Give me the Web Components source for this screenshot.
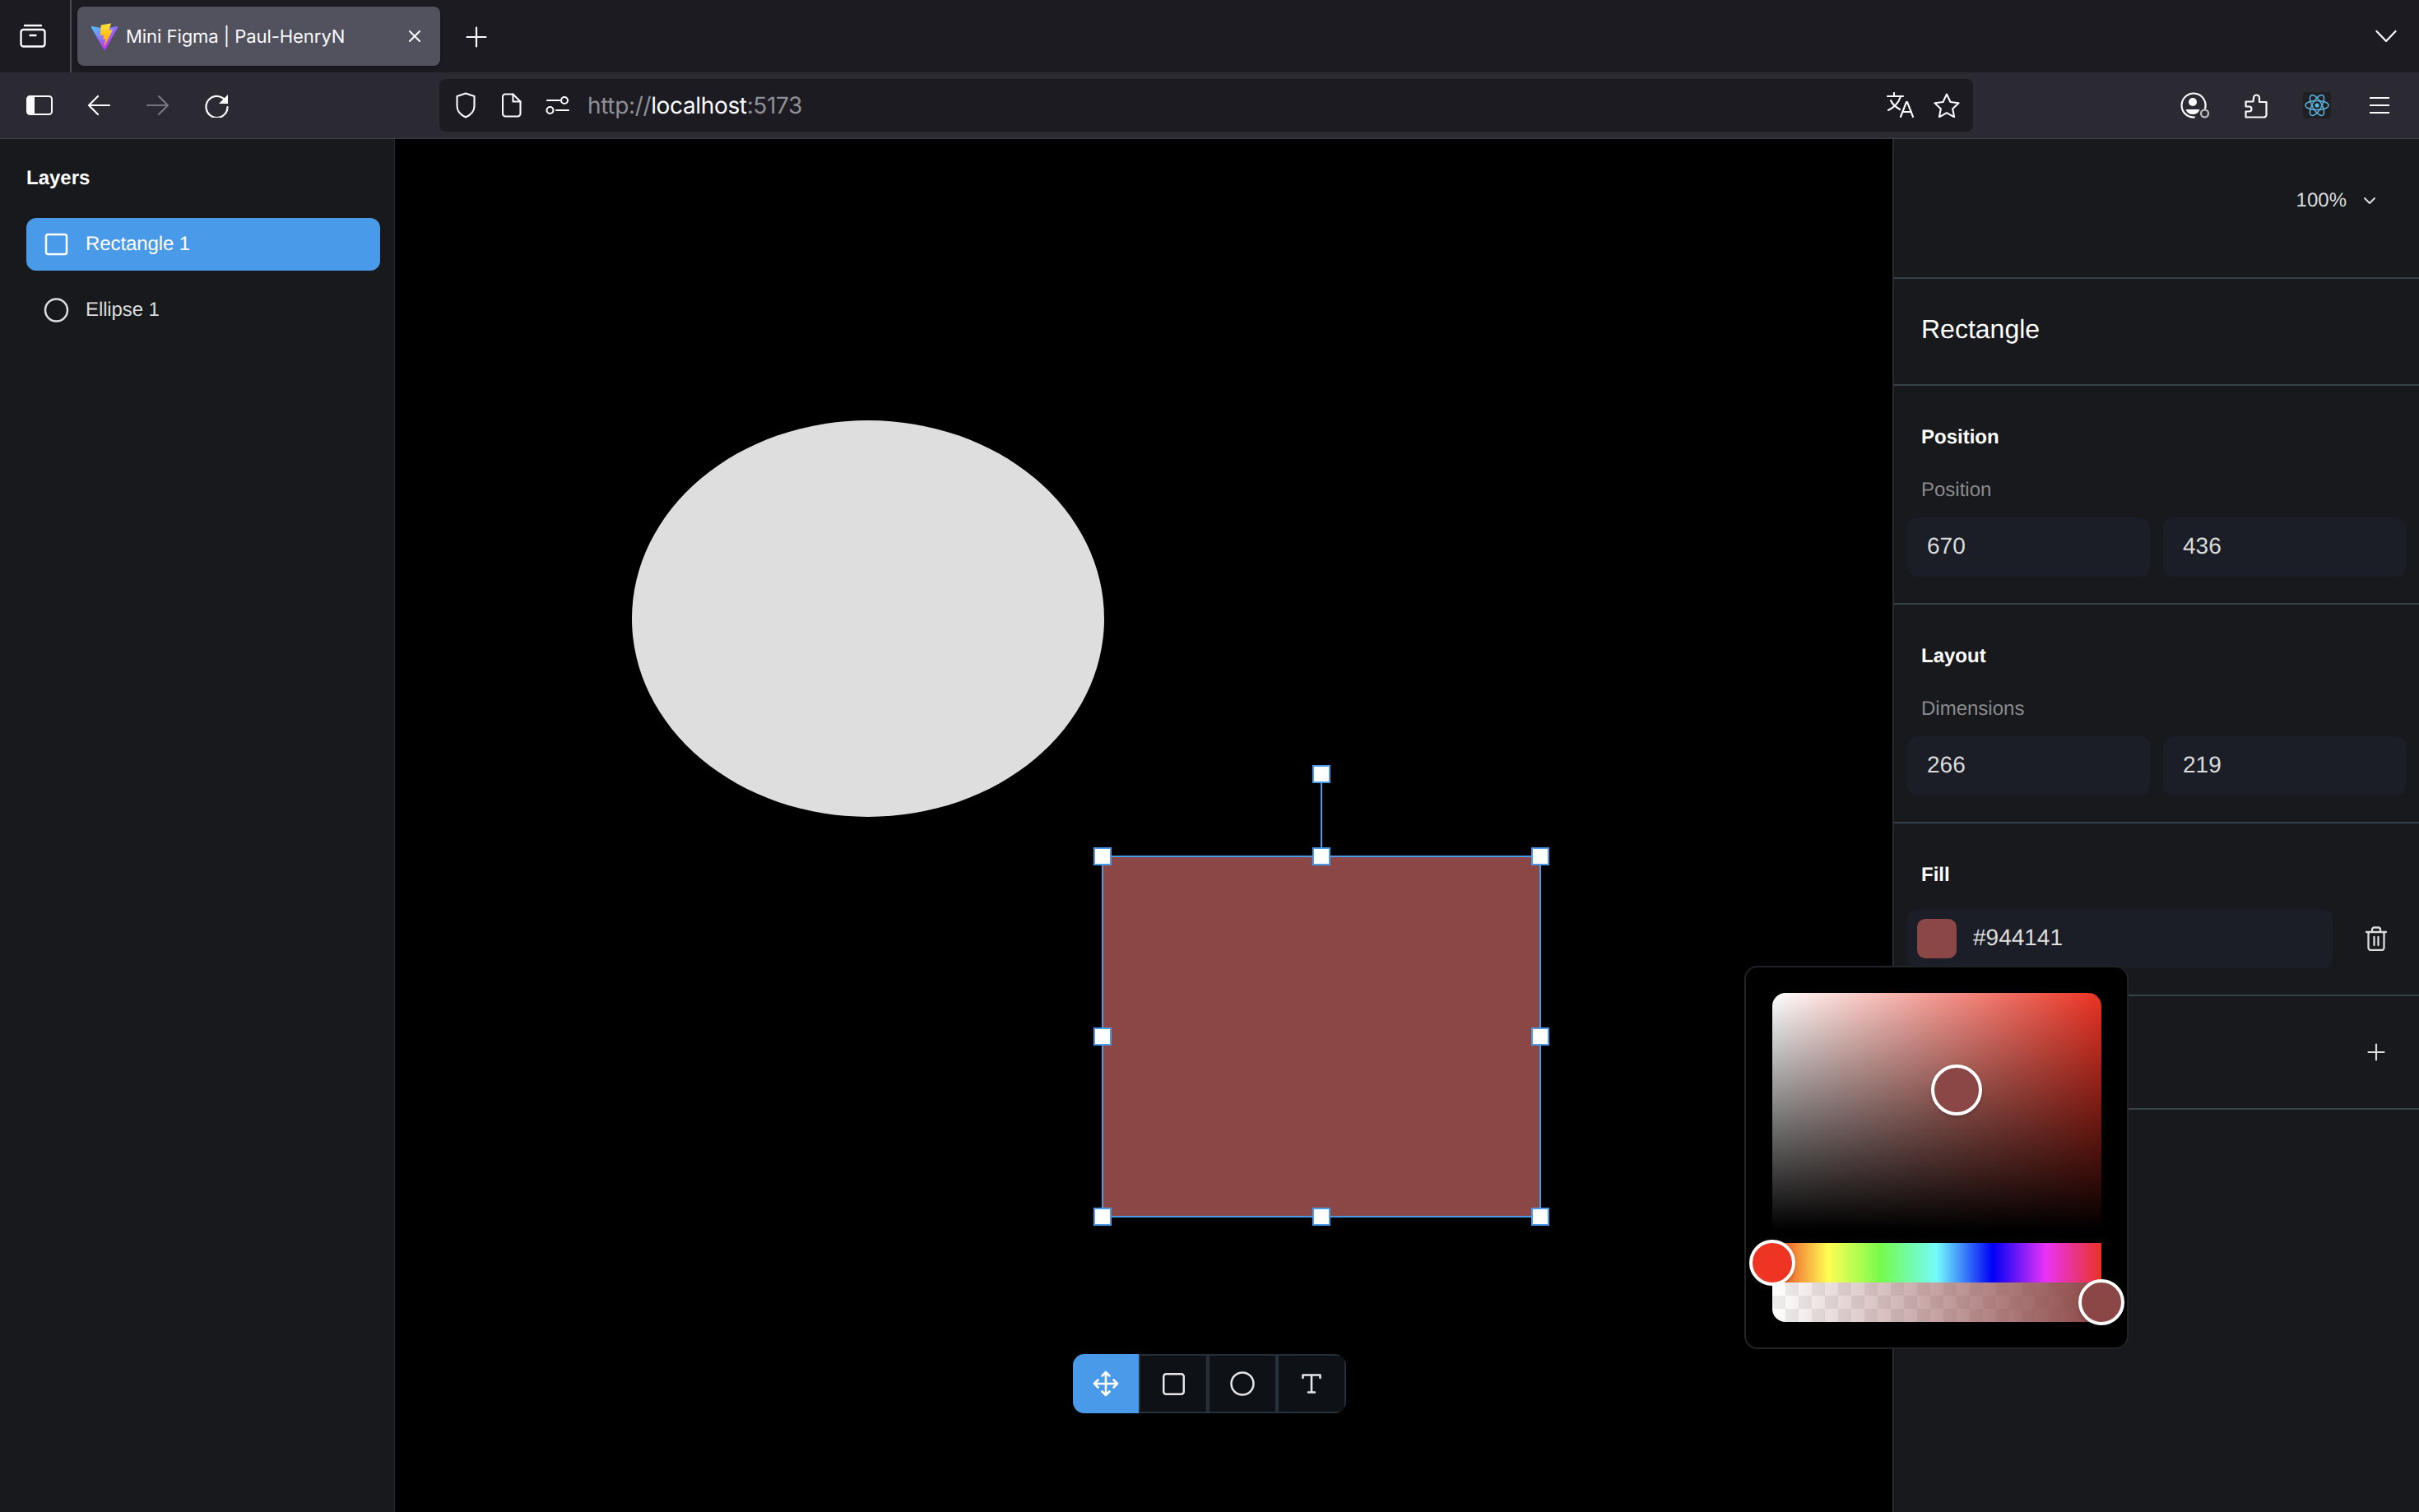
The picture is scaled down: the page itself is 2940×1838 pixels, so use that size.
<!DOCTYPE html>
<html>
<head>
<meta charset="utf-8">
<title>Mini Figma | Paul-HenryN</title>
<style>
  html, body { margin: 0; height: 100%; background: #000; overflow: hidden; }
  body { display: flex; flex-direction: column; width: 2940px; height: 1838px; font-family: "Liberation Sans", Arial, sans-serif; text-rendering: geometricPrecision; }
  .main { flex: 1; display: flex; min-height: 0; }
</style>
</head>
<body>
<tab-strip title-text="Mini Figma | Paul-HenryN"></tab-strip>
<nav-bar></nav-bar>
<div class="main">
  <layers-panel>
    <layer-item selected kind="rect">Rectangle 1</layer-item>
    <layer-item kind="ellipse">Ellipse 1</layer-item>
  </layers-panel>
  <design-canvas></design-canvas>
  <props-panel></props-panel>
</div>

<script>
const svgAttrs = 'fill="none" stroke="currentColor" stroke-linecap="round" stroke-linejoin="round"';

class TabStrip extends HTMLElement {
  constructor() {
    super();
    this.shadowDOM = this.attachShadow({mode: 'open'});
  }
  connectedCallback() {
    this.shadowDOM.innerHTML = `
      <style>
        :host { display: flex; height: 88px; background: #1c1b22; color: #fbfbfe; align-items: stretch; flex: none; }
        .views { display: flex; align-items: center; justify-content: center; padding-right: 5px; box-sizing: border-box; border-right: 2px solid #4a4a52; width: 87px; }
        .tab { margin: 8px 0 8px 7px; width: 441px; background: #52525e; border-radius: 8px; display: flex; align-items: center; padding: 0 23px 0 16px; box-sizing: border-box; box-shadow: 0 1px 4px rgba(0,0,0,.4); }
        .title { font: 400 22px/28px Inter, "Liberation Sans", sans-serif; margin: 2px 0 0 9px; flex: 1; white-space: nowrap; letter-spacing: -.05px; }
        .plus { margin: 2px 0 0 31px; align-self: center; display: flex; }
        .end { margin-left: auto; margin-right: 27px; align-self: center; display: flex; }
        svg { display: block; }
      </style>
      <div class="views">
        <svg width="32" height="32" viewBox="0 0 32 32" ${svgAttrs} stroke-width="2.4">
          <rect x="1.5" y="8" width="29" height="20.5" rx="3"/>
          <path d="M6 3h20"/><path d="M12.5 15h7"/>
        </svg>
      </div>
      <div class="tab">
        <svg width="34" height="34" viewBox="0 0 410 404" style="margin-top:1px">
          <defs>
            <linearGradient id="v0" x1="6" y1="33" x2="235" y2="344" gradientUnits="userSpaceOnUse"><stop stop-color="#41D1FF"/><stop offset="1" stop-color="#BD34FE"/></linearGradient>
            <linearGradient id="v1" x1="194.651" y1="8.818" x2="236.076" y2="292.989" gradientUnits="userSpaceOnUse"><stop stop-color="#FFEA83"/><stop offset=".083" stop-color="#FFDD35"/><stop offset="1" stop-color="#FFA800"/></linearGradient>
          </defs>
          <path fill="url(#v0)" d="M399.641 59.5246L215.643 388.545C211.844 395.338 202.084 395.378 198.228 388.618L10.5817 59.5563C6.38087 52.1896 12.6802 43.2665 21.0281 44.7586L205.223 77.6824C206.398 77.8924 207.601 77.8904 208.776 77.6763L389.119 44.8058C397.439 43.2894 403.768 52.1434 399.641 59.5246Z"/>
          <path fill="url(#v1)" d="M292.965 1.5744L156.801 28.2552C154.563 28.6937 152.906 30.5903 152.771 32.8664L144.395 174.33C144.198 177.662 147.258 180.248 150.51 179.498L188.42 170.749C191.967 169.931 195.172 173.055 194.443 176.622L183.18 231.775C182.422 235.487 185.907 238.661 189.532 237.56L212.947 230.446C216.577 229.344 220.065 232.527 219.297 236.242L201.398 322.875C200.278 328.294 207.486 331.249 210.492 326.603L212.5 323.5L323.454 102.072C325.312 98.3645 322.108 94.137 318.036 94.9228L279.014 102.454C275.347 103.161 272.227 99.746 273.262 96.1583L298.731 7.86689C299.767 4.27314 296.636 0.855181 292.965 1.5744Z"/>
        </svg>
        <span class="title">${this.getAttribute('title-text')}</span>
        <svg width="16" height="16" viewBox="0 0 16 16" ${svgAttrs} stroke-width="2"><path d="M2 2l12 12M14 2L2 14"/></svg>
      </div>
      <div class="plus"><svg width="26" height="26" viewBox="0 0 26 26" ${svgAttrs} stroke-width="2.2"><path d="M13 1.5v23M1.5 13h23"/></svg></div>
      <div class="end"><svg width="26" height="16" viewBox="0 0 26 16" ${svgAttrs} stroke-width="2.2"><path d="M1.5 2L13 14 24.500 2"/></svg></div>
    `;
  }
}
customElements.define('tab-strip', TabStrip);

class NavBar extends HTMLElement {
  constructor() {
    super();
    this.shadowDOM = this.attachShadow({mode: 'open'});
  }
  connectedCallback() {
    this.shadowDOM.innerHTML = `
      <style>
        :host { display: flex; height: 80px; box-sizing: content-box; border-bottom: 1px solid #3d3d44; background: #2b2a33; color: #fbfbfe; align-items: center; padding-left: 12px; flex: none; }
        .btn { width: 72px; height: 64px; display: flex; align-items: center; justify-content: center; flex: none; }
        .btn.dim { color: #76767c; }
        .url { margin-left: 234px; width: 1864px; height: 64px; background: #1c1b22; border-radius: 8px; display: flex; align-items: center; box-sizing: border-box; padding-left: 4px; flex: none; }
        .url .ic { width: 56px; display: flex; justify-content: center; flex: none; }
        .addr { font: 400 28px Inter, "Liberation Sans", sans-serif; color: #8f8f96; margin-left: 8px; flex: 1; letter-spacing: -.35px; }
        .addr b { font-weight: 400; color: #fbfbfe; }
        .tail { display: flex; margin-left: auto; padding-right: 11px; }
        .tail .btn { width: 75px; }
        .react { background: #1f2024; border-radius: 3px; width: 34px; height: 32px; display: flex; align-items: center; justify-content: center; margin-left: -1px; }
        svg { display: block; }
      </style>
      <div class="btn"><svg width="32" height="24" viewBox="0 0 32 24"><rect x="1" y="1" width="30" height="22" rx="3.5" fill="none" stroke="currentColor" stroke-width="2"/><path d="M4.500 1h5.500v22H4.500a3.500 3.500 0 0 1-3.500-3.500v-15A3.500 3.500 0 0 1 4.500 1z" fill="currentColor"/></svg></div>
      <div class="btn"><svg width="28" height="26" viewBox="0 0 28 26" ${svgAttrs} stroke-width="2.2"><path d="M27 13H2.500M13 2L2 13l11 11"/></svg></div>
      <div class="btn dim"><svg width="28" height="26" viewBox="0 0 28 26" ${svgAttrs} stroke-width="2.2"><path d="M1 13h24.500M15 2l11 11-11 11"/></svg></div>
      <div class="btn"><svg width="30" height="30" viewBox="0 0 30 30" ${svgAttrs} stroke-width="2.2"><path d="M26.500 12a13 13 0 1 0 1 5"/><path d="M28 2v11H17z" fill="currentColor" stroke="none"/></svg></div>
      <div class="url">
        <div class="ic"><svg width="24" height="32" viewBox="0 0 24 32" ${svgAttrs} stroke-width="2.1"><path d="M12 1.500L22.500 5v12c0 6.500-5 11-10.500 13.500C6.500 28 1.500 23.500 1.500 17V5z"/></svg></div>
        <div class="ic"><svg width="24" height="30" viewBox="0 0 24 30" ${svgAttrs} stroke-width="2.1"><path d="M4 1.500h9.500l9 9V25a3.500 3.500 0 0 1-3.500 3.500H4.500A3.500 3.500 0 0 1 1 25V4.500a3 3 0 0 1 3-3z"/><path d="M13.500 1.500v9h9"/></svg></div>
        <div class="ic"><svg width="30" height="24" viewBox="0 0 30 24" ${svgAttrs} stroke-width="2.1"><circle cx="23" cy="6" r="4"/><circle cx="5.500" cy="18" r="4"/><path d="M2 6h15M13 18h15"/></svg></div>
        <div class="addr">http://<b>localhost</b>:5173</div>
        <svg width="34" height="32" viewBox="0 0 34 32" ${svgAttrs} stroke-width="2.1"><path d="M1 5h19M9 1v4M17 5c-2 7-7 13-15 17M5 10c2 5 6 8 11 11"/><path d="M17 30l7-18h1l7 18M20 24h10"/></svg>
        <div style="width:23px"></div>
        <svg width="32" height="30" viewBox="0 0 32 30" ${svgAttrs} stroke-width="2.1" style="margin-right:16px"><path d="M16 1.500l4.500 9.500 10 1.300-7.300 7 1.900 10L16 24.200 6.900 29.300l1.900-10-7.300-7 10-1.300z"/></svg>
      </div>
      <div class="tail">
        <div class="btn" style="margin-right:-1px;margin-left:1px"><svg width="38" height="32" viewBox="0 0 38 32" fill="none"><path d="M31 20A14.500 14.500 0 1 0 18 30.500" stroke="currentColor" stroke-width="2.2" stroke-linecap="round"/><circle cx="16" cy="12" r="5" fill="currentColor"/><path d="M7.500 21h17a9 9 0 0 1-17 0z" fill="currentColor"/><circle cx="30.500" cy="26" r="4.500" stroke="#b3b3b8" stroke-width="2.500"/></svg></div>
        <div class="btn"><svg width="28" height="32" viewBox="0 0 28 32" ${svgAttrs} stroke-width="2.2"><path d="M1.500 30.500h22a3 3 0 0 0 3-3V12h-8.500V7a3.500 3.500 0 0 0-7 0l-.5 4.500H1.500v6h4a2.500 2.500 0 0 1 0 6h-4z"/></svg></div>
        <div class="btn"><div class="react"><svg width="30" height="30" viewBox="-15 -15 30 30" fill="none" stroke="#5cb3dc" stroke-width="1.500"><ellipse rx="14" ry="5.600"/><ellipse rx="14" ry="5.600" transform="rotate(60)"/><ellipse rx="14" ry="5.600" transform="rotate(120)"/><circle r="2.600" fill="#5cb3dc" stroke="none"/></svg></div></div>
        <div class="btn"><svg width="26" height="22" viewBox="0 0 26 22" stroke="currentColor" stroke-width="2.200" fill="none"><path d="M1 2h24M1 11h24M1 20h24"/></svg></div>
      </div>
    `;
  }
}
customElements.define('nav-bar', NavBar);

class LayersPanel extends HTMLElement {
  constructor() {
    super();
    this.shadowDOM = this.attachShadow({mode: 'open'});
    this.shadowDOM.innerHTML = `
      <style>
        :host { display: block; flex: none; background: #18191d; border-right: 1px solid #2a2b2f; color: #fff; padding-top: 34px; box-sizing: border-box; width: 480px; }
        h2 { margin: 0 0 0 32px; font: 700 24px/28px "Liberation Sans", Arial, sans-serif; height: 28px; }
        .list { margin: 34px 17px 0 32px; display: flex; flex-direction: column; gap: 16px; }
      </style>
      <h2>Layers</h2>
      <div class="list"><slot></slot></div>
    `;
  }
}
customElements.define('layers-panel', LayersPanel);

class LayerItem extends HTMLElement {
  constructor() {
    super();
    this.shadowDOM = this.attachShadow({mode: 'open'});
  }
  connectedCallback() {
    const kind = this.getAttribute('kind');
    const shape = kind === 'rect'
      ? '<rect x="4" y="4" width="25" height="24" rx="2.500"/>'
      : '<ellipse cx="16.500" cy="16" rx="13.500" ry="13.500"/>';
    this.shadowDOM.innerHTML = `
      <style>
        :host { display: flex; height: 64px; border-radius: 12px; align-items: center; padding-left: 20px; gap: 19px; font: 400 24px "Liberation Sans", Arial, sans-serif; color: #dcdcdc; letter-spacing: -.1px; }
        :host([selected]) { background: #4a9aea; color: #fff; }
        svg { display: block; flex: none; }
      </style>
      <svg width="33" height="32" viewBox="0 0 33 32" fill="none" stroke="currentColor" stroke-width="2.500">${shape}</svg>
      <span><slot></slot></span>
    `;
  }
}
customElements.define('layer-item', LayerItem);

class DesignCanvas extends HTMLElement {
  constructor() {
    super();
    this.shadowDOM = this.attachShadow({mode: 'open'});
  }
  connectedCallback() {
    // canvas coordinates are offset by the 480px sidebar and 169px chrome
    const handle = (x, y) => `<rect x="${x - 10}" y="${y - 10}" width="20" height="20" fill="#fff" stroke="#4a9aea" stroke-width="2"/>`;
    const xs = [860, 1126, 1392];
    const ys = [872, 1091, 1310];
    let handles = handle(1126, 772);
    ys.forEach((y, r) => xs.forEach((x, c) => {
      if (r === 1 && c === 1) return;
      handles += handle(x, y);
    }));
    this.shadowDOM.innerHTML = `
      <style>
        :host { display: block; flex: 1; position: relative; background: #000; min-width: 0; }
        svg.art { position: absolute; left: 0; top: 0; width: 100%; height: 100%; display: block; }
        color-picker { position: absolute; left: 1640px; top: 1005px; }
        shape-tools { position: absolute; left: 824px; top: 1477px; }
      </style>
      <svg class="art" viewBox="0 0 1820 1669" preserveAspectRatio="xMinYMin slice">
        <ellipse cx="575" cy="583" rx="287" ry="241" fill="#dedede"/>
        <rect x="860" y="872" width="532" height="438" fill="#8b4746" stroke="#4a9aea" stroke-width="2"/>
        <path d="M1126 772v100" stroke="#4a9aea" stroke-width="2"/>
        ${handles}
      </svg>
      <shape-tools></shape-tools>
      <color-picker></color-picker>
    `;
  }
}
customElements.define('design-canvas', DesignCanvas);

class ShapeTools extends HTMLElement {
  constructor() {
    super();
    this.shadowDOM = this.attachShadow({mode: 'open'});
    this.shadowDOM.innerHTML = `
      <style>
        :host { display: flex; width: 332px; height: 72px; border-radius: 14px; background: #0e1116; color: #e6e6e6; overflow: hidden; }
        .tool { box-sizing: border-box; width: 84px; display: flex; align-items: center; justify-content: center; border: 2px solid #262f3a; border-width: 2px 0 2px 4px; }
        .tool.on { width: 80px; border: 0; background: #4a9aea; color: #fff; }
        .tool.second { width: 82px; border-left-width: 2px; }
        .tool.last { width: 86px; border-right-width: 2px; }
        svg { display: block; }
      </style>
      <div class="tool on"><svg width="32" height="32" viewBox="0 0 32 32" ${svgAttrs} stroke-width="2.600"><path d="M16 2v28M2 16h28M11.500 6.500L16 2l4.500 4.500M11.500 25.500L16 30l4.500-4.500M6.500 11.500L2 16l4.500 4.500M25.500 11.500L30 16l-4.500 4.500"/></svg></div>
      <div class="tool second"><svg width="27" height="27" viewBox="0 0 27 27" fill="none" stroke="currentColor" stroke-width="2.500"><rect x="1.250" y="1.250" width="24.500" height="24.500" rx="3"/></svg></div>
      <div class="tool"><svg width="30" height="30" viewBox="0 0 30 30" fill="none" stroke="currentColor" stroke-width="2.500"><circle cx="15" cy="15" r="13.500"/></svg></div>
      <div class="tool last"><svg width="24" height="24" viewBox="0 0 24 24" ${svgAttrs} stroke-width="2.600"><path d="M1.500 5V1.500h21V5M12 1.500v21M8 22.500h8"/></svg></div>
    `;
  }
}
customElements.define('shape-tools', ShapeTools);

class ColorPicker extends HTMLElement {
  constructor() {
    super();
    this.shadowDOM = this.attachShadow({mode: 'open'});
    this.shadowDOM.innerHTML = `
      <style>
        :host { display: block; width: 467px; height: 466px; box-sizing: border-box; background: #000; border: 2px solid #222327; border-radius: 16px; padding: 31px 30px 0 32px; }
        .sat { position: relative; width: 400px; height: 288px; border-radius: 16px 16px 0 0; background:
          linear-gradient(0deg, #000, rgba(0,0,0,0)),
          linear-gradient(90deg, #fff, rgba(255,255,255,0)),
          #ea3323; }
        .hue { position: relative; width: 400px; height: 48px; margin-top: 16px; background: linear-gradient(90deg, #ea3323 0, #fffe54 17%, #75fb4c 33%, #73fbfd 50%, #0000f5 67%, #ea33f7 83%, #ea3323 100%); }
        .alpha { position: relative; width: 400px; height: 48px; border-radius: 0 0 16px 16px; background:
          linear-gradient(90deg, rgba(139,71,70,0), #8b4746),
          repeating-conic-gradient(#eeeeee 0 25%, #fff 0 50%) 0 0 / 32px 32px; }
        .thumb { position: absolute; box-sizing: border-box; width: 56px; height: 56px; border: 4px solid #fff; border-radius: 50%; box-shadow: 0 2px 4px rgba(0,0,0,.2); }
        .sat .thumb { width: 62px; height: 62px; left: 193px; top: 87px; background: #8b4746; }
        .hue .thumb { left: -28px; top: -4px; background: #ee3524; }
        .alpha .thumb { right: -28px; top: -4px; background: #8b4746; }
      </style>
      <div class="sat"><div class="thumb"></div></div>
      <div class="hue"><div class="thumb"></div></div>
      <div class="alpha"><div class="thumb"></div></div>
    `;
  }
}
customElements.define('color-picker', ColorPicker);

class PropSection extends HTMLElement {
  constructor() {
    super();
    this.shadowDOM = this.attachShadow({mode: 'open'});
  }
  connectedCallback() {
    const sub = this.getAttribute('label');
    this.shadowDOM.innerHTML = `
      <style>
        :host { display: block; box-sizing: border-box; border-bottom: 2px solid #37414a; padding: 49px 16px 32px; }
        h3 { margin: 0 0 0 17px; font: 700 24px/28px "Liberation Sans", Arial, sans-serif; color: #fff; }
        .sub { margin: 36px 0 19px 17px; font: 400 24px/28px "Liberation Sans", Arial, sans-serif; color: #8a8b8d; }
        .no-sub { margin-top: 27px; }
        .fields { display: grid; grid-template-columns: 295px 295px; gap: 16px; }
      </style>
      <h3>${this.getAttribute('heading')}</h3>
      ${sub ? `<div class="sub">${sub}</div><div class="fields"><slot></slot></div>` : `<div class="no-sub"><slot></slot></div>`}
    `;
  }
}
customElements.define('prop-section', PropSection);

class PropField extends HTMLElement {
  constructor() {
    super();
    this.shadowDOM = this.attachShadow({mode: 'open'});
    this.shadowDOM.innerHTML = `
      <style>
        :host { display: flex; align-items: center; height: 72px; padding: 0 0 2px 24px; box-sizing: border-box; background: #1b1e26; border-radius: 12px; font: 400 28px "Liberation Sans", Arial, sans-serif; color: #dcdcdc; }
      </style>
      <slot></slot>
    `;
  }
}
customElements.define('prop-field', PropField);

class FillRow extends HTMLElement {
  constructor() {
    super();
    this.shadowDOM = this.attachShadow({mode: 'open'});
    this.shadowDOM.innerHTML = `
      <style>
        :host { display: flex; align-items: center; }
        .field { width: 517px; height: 72px; background: #1b1e26; border-radius: 12px; display: flex; align-items: center; padding-left: 12px; box-sizing: border-box; gap: 20px; font: 400 28px "Liberation Sans", Arial, sans-serif; color: #dcdcdc; }
        .txt { position: relative; top: -1px; }
        .swatch { width: 48px; height: 48px; border-radius: 10px; background: #8b4746; }
        svg { display: block; margin-left: 39px; color: #dcdcdc; }
      </style>
      <div class="field"><div class="swatch"></div><span class="txt"><slot></slot></span></div>
      <svg width="28" height="30" viewBox="0 0 28 30" ${svgAttrs} stroke-width="2.300"><path d="M2 7h24M9 7V4a2.500 2.500 0 0 1 2.500-2.500h5A2.500 2.500 0 0 1 19 4v3M4.500 7v19a3 3 0 0 0 3 3h13a3 3 0 0 0 3-3V7M11.500 13v10M16.500 13v10"/></svg>
    `;
  }
}
customElements.define('fill-row', FillRow);

class PropsPanel extends HTMLElement {
  constructor() {
    super();
    this.shadowDOM = this.attachShadow({mode: 'open'});
    this.shadowDOM.innerHTML = `
      <style>
        :host { display: block; width: 640px; flex: none; box-sizing: border-box; background: #18191d; border-left: 2px solid #2a2b2f; font-family: "Liberation Sans", Arial, sans-serif; }
        .zoom { height: 170px; box-sizing: border-box; border-bottom: 2px solid #37414a; display: flex; justify-content: flex-end; align-items: center; padding: 0 52px 19px 0; gap: 20px; font-size: 24px; color: #dcdcdc; }
        .name { height: 130px; box-sizing: border-box; border-bottom: 2px solid #37414a; padding: 0 33px 5px; display: flex; align-items: center; font-size: 32px; color: #fff; }
        .pos { height: 266px; }
        .fill { height: 210px; }
        .more { height: 138px; box-sizing: border-box; border-bottom: 2px solid #37414a; display: flex; justify-content: flex-end; align-items: center; padding-right: 41px; color: #dcdcdc; }
        svg { display: block; }
      </style>
      <div class="zoom"><span>100%</span><svg width="16" height="10" viewBox="0 0 16 10" ${svgAttrs} stroke-width="2"><path d="M2 2l6 6 6-6"/></svg></div>
      <div class="name">Rectangle</div>
      <prop-section class="pos" heading="Position" label="Position">
        <prop-field>670</prop-field><prop-field>436</prop-field>
      </prop-section>
      <prop-section class="pos" heading="Layout" label="Dimensions">
        <prop-field>266</prop-field><prop-field>219</prop-field>
      </prop-section>
      <prop-section class="fill" heading="Fill">
        <fill-row>#944141</fill-row>
      </prop-section>
      <div class="more"><svg width="22" height="22" viewBox="0 0 22 22" ${svgAttrs} stroke-width="2.200"><path d="M11 1.500v19M1.500 11h19"/></svg></div>
    `;
  }
}
customElements.define('props-panel', PropsPanel);
</script>
</body>
</html>
